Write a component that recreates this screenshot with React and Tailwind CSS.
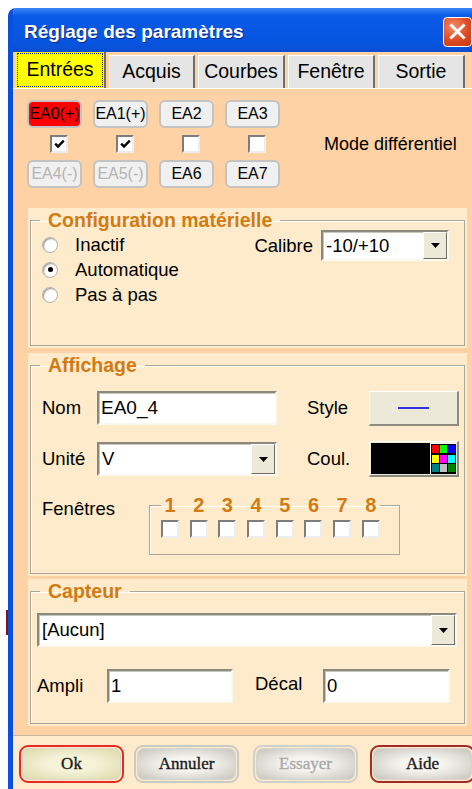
import React from "react";

// XP-style sunken edit box
function Field({ className = "", children }) {
  return (
    <div
      className={`flex items-stretch border-2 border-t-[#8b887e] border-l-[#8b887e] border-b-[#fbf8f0] border-r-[#fbf8f0] bg-white shadow-[inset_1px_1px_0_#c9c6bc] ${className}`}
    >
      {children}
    </div>
  );
}

function Dropdown({ value, className = "" }) {
  return (
    <Field className={className}>
      <span className="flex flex-1 items-center pl-[3px] text-[18.5px] text-black">{value}</span>
      <span className="flex w-[24px] items-center justify-center border border-t-white border-l-white border-b-[#716e64] border-r-[#716e64] bg-[#ece9d8]">
        <svg width="9" height="5" viewBox="0 0 9 5">
          <path d="M0 0h9L4.5 5z" fill="#000" />
        </svg>
      </span>
    </Field>
  );
}

function Box({ checked }) {
  return (
    <span className="flex h-[18px] w-[18px] items-center justify-center border-2 border-t-[#7d7d7d] border-l-[#7d7d7d] border-b-[#ededed] border-r-[#ededed] bg-white">
      {checked && (
        <svg width="11" height="10" viewBox="0 0 11 10">
          <path d="M1.2 4.6 4 7.6 9.8 1.6" fill="none" stroke="#000" strokeWidth="2.4" />
        </svg>
      )}
    </span>
  );
}

function Radio({ on }) {
  return (
    <span className="flex h-[16px] w-[16px] items-center justify-center rounded-full border border-[#b4b4ae] bg-[radial-gradient(circle_at_65%_65%,#ffffff_45%,#d8d8d2)] shadow-[inset_1px_1px_1px_#a0a0a0]">
      {on && <span className="h-[5px] w-[5px] rounded-full bg-black" />}
    </span>
  );
}

function EaButton({ label, red, dim }) {
  return (
    <div
      className={`flex h-[28px] w-[55px] items-center justify-center rounded-[6px] border-2 border-[#c3c3c3] text-[16px] ${
        red ? "bg-[#ff0000] text-black" : "bg-[#f0f0f0]"
      } ${dim ? "text-[#b4b4b4]" : "text-black"}`}
    >
      {label}
    </div>
  );
}

function Tab({ label, width, active }) {
  if (active) {
    return (
      <div className={`${width} z-10 h-[36px] border-r-2 border-r-[#6e6e6e] bg-[#ffff00] p-[1px]`}>
        <div className="flex h-full w-full items-center justify-center border border-dotted border-[#22228a] text-[19.5px] text-black">
          {label}
        </div>
      </div>
    );
  }
  return (
    <div
      className={`${width} flex h-[33px] items-center justify-center border-t border-l border-t-white border-l-white border-r-2 border-r-[#6e6e6e] bg-[#e5e5e5] text-[19.5px] text-black`}
    >
      {label}
    </div>
  );
}

function Group({ title, className = "", children }) {
  return (
    <div className={`ml-[15px] mr-[8px] flex flex-col bg-[#fdebcb] px-[2px] pb-[2px] ${className}`}>
      <fieldset className="flex-1 border border-[#a9a69c] shadow-[inset_1px_1px_0_#ffffff]">
        <legend className="ml-[9px] px-[8px] text-[19.5px] font-bold leading-[24px] text-[#d17b12]">
          {title}
        </legend>
        {children}
      </fieldset>
    </div>
  );
}

function WinButton({ label, ring, tone = "gray", muted }) {
  const fill =
    tone === "yellow"
      ? "bg-[radial-gradient(ellipse_at_center,#f5f3d8_35%,#dcd8ac)]"
      : "bg-[radial-gradient(ellipse_at_center,#f6f5f0_30%,#c6c4bb)]";
  return (
    <div className={`h-[38px] w-[105px] rounded-[9px] border-2 ${ring} p-[1px]`}>
      <div
        className={`flex h-full w-full items-center justify-center rounded-[7px] border border-[#d8d6cc] ${fill} font-['Liberation_Serif',serif] text-[17px] [-webkit-text-stroke:0.35px_currentColor] ${
          muted ? "text-[#a9a9a9]" : "text-[#1b1b1b]"
        }`}
      >
        {label}
      </div>
    </div>
  );
}

const palette = [
  "bg-[#ff0000]",
  "bg-[#00ff00]",
  "bg-[#0000ff]",
  "bg-[#ffff00]",
  "bg-[#ff00ff]",
  "bg-[#00ffff]",
  "bg-[#008080]",
  "bg-[#c0c0c0]",
  "bg-[#008000]",
];

export default function App() {
  return (
    <div className="flex h-[789px] w-[472px] overflow-hidden bg-white font-['Liberation_Sans',Arial,sans-serif] text-[18.5px] text-black">
      {/* whatever sits behind the dialog */}
      <div className="w-[8px] shrink-0">
        <div className="ml-[6px] mt-[610px] h-[25px] w-[2px] bg-[#7a1424]" />
      </div>

      <div className="mt-[8px] flex h-[781px] w-[467px] shrink-0 flex-col overflow-hidden rounded-tl-[8px] border-l-[5px] border-[#0b50dc]">
        {/* title bar */}
        <div className="flex h-[44px] shrink-0 items-center justify-between bg-[linear-gradient(180deg,#3b84f5_0%,#0a5ae8_18%,#0656e2_70%,#0a4ed4_100%)] pl-[11px] pr-[3px]">
          <span className="pt-[5px] text-[19px] font-bold text-white [text-shadow:1px_1px_0_#0b2a86]">
            Réglage des paramètres
          </span>
          <div className="mt-[3px] flex h-[30px] w-[29px] items-center justify-center rounded-[4px] border border-white bg-[radial-gradient(circle_at_35%_30%,#f38a6a,#df4a22_55%,#c23a14)]">
            <svg width="17" height="17" viewBox="0 0 17 17">
              <path d="M2.5 2.5 14.5 14.5M14.5 2.5 2.5 14.5" stroke="#fff" strokeWidth="3" strokeLinecap="square" />
            </svg>
          </div>
        </div>

        {/* tabs */}
        <div className="flex h-[36px] shrink-0 items-end gap-[3px] bg-[#fed2a5] pl-[3px]">
          <Tab label="Entrées" width="w-[90px]" active />
          <Tab label="Acquis" width="w-[86px]" />
          <Tab label="Courbes" width="w-[87px]" />
          <Tab label="Fenêtre" width="w-[87px]" />
          <Tab label="Sortie" width="w-[87px]" />
        </div>

        {/* tab page */}
        <div className="flex flex-1 flex-col border-t border-white bg-[#fed2a5]">
          <div className="mt-[11px] flex items-center pl-[14px]">
            <div className="grid grid-cols-[repeat(4,55px)] gap-x-[11px]">
              <EaButton label="EA0(+)" red />
              <EaButton label="EA1(+)" />
              <EaButton label="EA2" />
              <EaButton label="EA3" />
              {[true, true, false, false].map((c, i) => (
                <div key={i} className="my-[7px] ml-[9px] flex justify-center">
                  <Box checked={c} />
                </div>
              ))}
              <EaButton label="EA4(-)" dim />
              <EaButton label="EA5(-)" dim />
              <EaButton label="EA6" />
              <EaButton label="EA7" />
            </div>
            <span className="ml-[44px] text-[18px]">Mode différentiel</span>
          </div>

          <Group title="Configuration matérielle" className="mt-[20px] h-[140px]">
            <div className="flex">
              <div className="flex flex-col pl-[11px]">
                {[
                  ["Inactif", false],
                  ["Automatique", true],
                  ["Pas à pas", false],
                ].map(([t, on]) => (
                  <div key={t} className="flex h-[25px] items-center gap-[17px]">
                    <Radio on={on} />
                    <span>{t}</span>
                  </div>
                ))}
              </div>
              <div className="ml-auto mr-[15px] -mt-[2px] flex h-[31px] items-center gap-[8px]">
                <span>Calibre</span>
                <Dropdown value="-10/+10" className="h-[31px] w-[128px]" />
              </div>
            </div>
          </Group>

          <Group title="Affichage" className="mt-[5px] h-[223px]">
            <div className="flex flex-col pl-[11px]">
              <div className="mt-[14px] flex h-[34px] items-center">
                <span className="w-[55px]">Nom</span>
                <Field className="h-[34px] w-[180px]">
                  <span className="flex items-center pl-[2px] text-[19px]">EA0_4</span>
                </Field>
                <span className="ml-[30px] w-[62px]">Style</span>
                <div className="flex h-[35px] w-[90px] items-center justify-center border border-t-white border-l-white border-b-2 border-r-2 border-b-[#8d8a80] border-r-[#8d8a80] bg-[#ece9d8]">
                  <span className="h-[2px] w-[31px] bg-[#2f2fe6]" />
                </div>
              </div>

              <div className="mt-[17px] flex h-[34px] items-center">
                <span className="w-[55px]">Unité</span>
                <Dropdown value="V" className="h-[34px] w-[180px]" />
                <span className="ml-[30px] w-[62px]">Coul.</span>
                <div className="flex h-[36px] w-[90px] border border-t-white border-l-white border-b-2 border-r-2 border-b-[#8d8a80] border-r-[#8d8a80] bg-[#ece9d8] p-[1px]">
                  <div className="flex-1 bg-black" />
                  <div className="grid grid-cols-[repeat(3,7px)] gap-[1px] border-l border-t border-white bg-black p-[1px]">
                    {palette.map((c) => (
                      <span key={c} className={`h-[8px] w-[7px] ${c}`} />
                    ))}
                  </div>
                </div>
              </div>

              <div className="mt-[19px] flex items-start">
                <span className="w-[107px]">Fenêtres</span>
                <fieldset className="h-[60px] w-[251px] border border-[#a9a69c] shadow-[inset_1px_1px_0_#ffffff]">
                  <legend className="ml-[11px] flex gap-[10.7px] px-0 text-[20px] font-bold leading-[20px] text-[#d17b12]">
                    {[1, 2, 3, 4, 5, 6, 7, 8].map((n) => (
                      <span key={n} className="w-[18px] text-center">
                        {n}
                      </span>
                    ))}
                  </legend>
                  <div className="mt-[5px] flex gap-[10.7px] pl-[11px]">
                    {[1, 2, 3, 4, 5, 6, 7, 8].map((n) => (
                      <Box key={n} />
                    ))}
                  </div>
                </fieldset>
              </div>
            </div>
          </Group>

          <Group title="Capteur" className="mt-[3px] h-[147px]">
            <div className="flex flex-col">
              <Dropdown value="[Aucun]" className="ml-[6px] mr-[7px] mt-[10px] h-[34px]" />
              <div className="mt-[22px] flex h-[34px] items-center pl-[6px]">
                <span className="w-[70px]">Ampli</span>
                <Field className="h-[34px] w-[126px]">
                  <span className="flex items-center pl-[2px]">1</span>
                </Field>
                <span className="ml-[22px] w-[68px] -mt-[5px]">Décal</span>
                <Field className="h-[34px] w-[127px]">
                  <span className="flex items-center pl-[2px]">0</span>
                </Field>
              </div>
            </div>
          </Group>
        </div>

        {/* dialog buttons */}
        <div className="flex h-[54px] shrink-0 border-t border-[#c9b9a2] bg-[#fdebcb] pl-[6px] pt-[9px]">
          <WinButton label="Ok" ring="border-[#ea2a22]" tone="yellow" />
          <div className="ml-[10px]">
            <WinButton label="Annuler" ring="border-[#c9c9c6]" />
          </div>
          <div className="ml-[14px]">
            <WinButton label="Essayer" ring="border-[#cfcfcc]" muted />
          </div>
          <div className="ml-[12px]">
            <WinButton label="Aide" ring="border-[#a32a26]" />
          </div>
        </div>
      </div>
    </div>
  );
}
